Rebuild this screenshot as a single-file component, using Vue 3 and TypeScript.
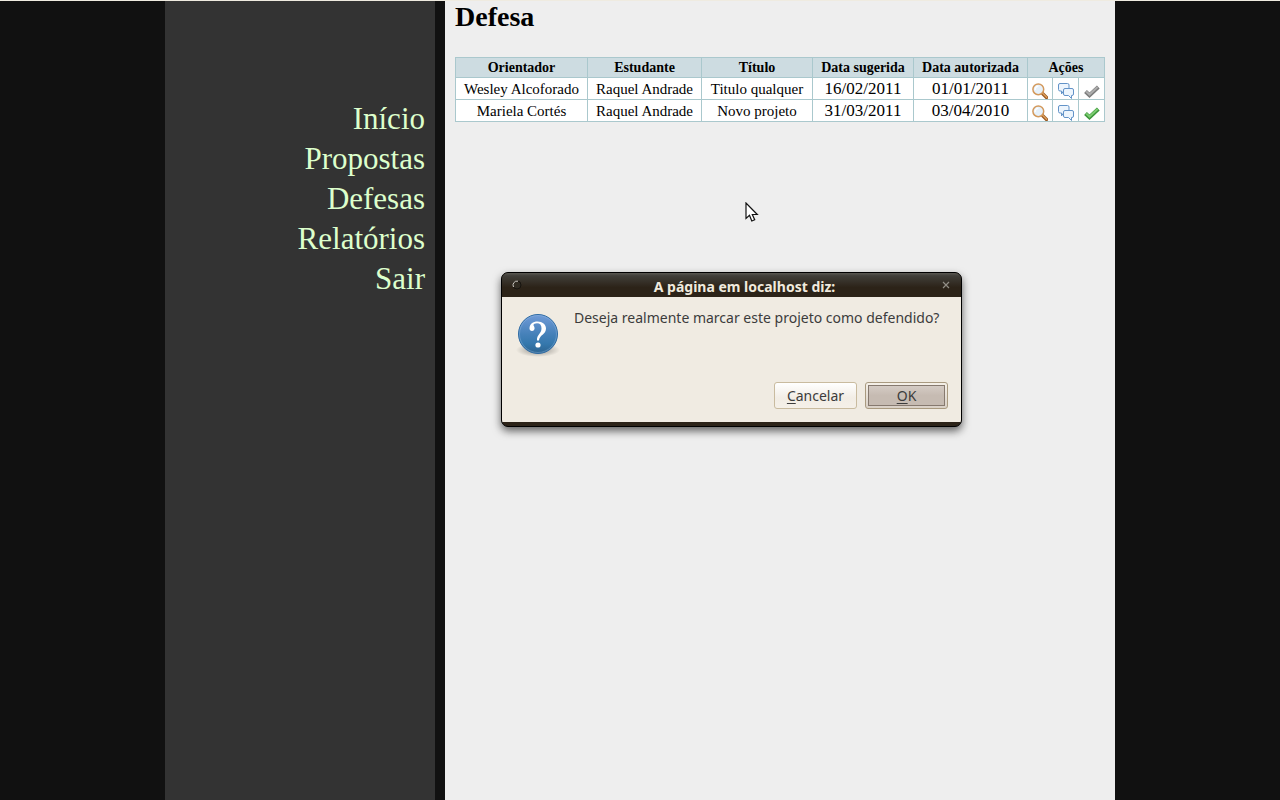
<script setup lang="ts">
import { ref } from 'vue'

interface Defense {
  advisor: string
  student: string
  title: string
  suggested: string
  authorized: string
  done: boolean
}

const links: string[] = ['Início', 'Propostas', 'Defesas', 'Relatórios', 'Sair']
const headings: string[] = ['Orientador', 'Estudante', 'Título', 'Data sugerida', 'Data autorizada']

const defenses = ref<Defense[]>([
  { advisor: 'Wesley Alcoforado', student: 'Raquel Andrade', title: 'Titulo qualquer', suggested: '16/02/2011', authorized: '01/01/2011', done: false },
  { advisor: 'Mariela Cortés', student: 'Raquel Andrade', title: 'Novo projeto', suggested: '31/03/2011', authorized: '03/04/2010', done: true },
])

const open = ref(true)
function close(): void {
  open.value = false
}
</script>

<template>
  <div class="page">
    <div class="shell">
      <nav class="sidebar">
        <a v-for="link in links" :key="link" href="#">{{ link }}</a>
      </nav>

      <main class="content">
        <h1>Defesa</h1>
        <table>
          <colgroup>
            <col class="c-advisor" />
            <col class="c-student" />
            <col class="c-title" />
            <col class="c-suggested" />
            <col class="c-authorized" />
            <col class="c-view" />
            <col class="c-action" />
            <col class="c-action" />
          </colgroup>
          <thead>
            <tr>
              <th v-for="h in headings" :key="h" scope="col">{{ h }}</th>
              <th colspan="3" scope="colgroup">Ações</th>
            </tr>
          </thead>
          <tbody>
            <tr v-for="d in defenses" :key="d.advisor">
              <td>{{ d.advisor }}</td>
              <td>{{ d.student }}</td>
              <td>{{ d.title }}</td>
              <td class="date">{{ d.suggested }}</td>
              <td class="date">{{ d.authorized }}</td>
              <td class="action">
                <a href="#" aria-label="Visualizar">
                  <svg width="16" height="16" viewBox="0 0 16 16">
                    <path d="M10.500 10.500l4 4" stroke="#97561f" stroke-width="3.200" stroke-linecap="round" />
                    <path d="M10.600 10.200l4 4" stroke="#dfa25f" stroke-width="1.400" stroke-linecap="round" />
                    <circle cx="6.300" cy="6.300" r="5.400" fill="#e6f1fb" stroke="#d3995c" stroke-width="1.500" />
                    <path d="M3.200 7a3.200 3.200 0 0 1 3.200-3.700" fill="none" stroke="#fff" stroke-width="1.400" />
                  </svg>
                </a>
              </td>
              <td class="action">
                <a href="#" aria-label="Comentários">
                  <svg width="16" height="16" viewBox="0 0 16 16" fill="#edf5fd" stroke="#6393c8" stroke-linejoin="round">
                    <path d="M2 .5h7.500q1.500 0 1.500 1.500v4.500q0 1.500-1.500 1.500H5.500L3.500 11V8H2Q.5 8 .5 6.500V2Q.5.500 2 .5z" />
                    <path d="M7 5.500h7q1.500 0 1.500 1.500v4q0 1.500-1.500 1.500h-.5v3L10.500 12.500H7Q5.500 12.500 5.500 11V7q0-1.500 1.500-1.500z" />
                  </svg>
                </a>
              </td>
              <td class="action">
                <a href="#" aria-label="Marcar como defendido">
                  <svg width="16" height="16" viewBox="0 0 16 16" fill="none">
                    <path d="M1.500 8.500L5.500 12.300 14.300 4" :stroke="d.done ? '#3c963a' : '#7c7c7c'" stroke-width="4" />
                    <path d="M2.200 8.500L5.500 11.600 13.600 4" :stroke="d.done ? '#7bcb70' : '#adadad'" stroke-width="2" />
                  </svg>
                </a>
              </td>
            </tr>
          </tbody>
        </table>
      </main>
    </div>

    <section v-if="open" class="dialog" role="alertdialog" aria-labelledby="dialog-title" aria-describedby="dialog-text">
      <header class="titlebar">
        <svg width="10" height="10" viewBox="0 0 10 10">
          <circle cx="5" cy="5" r="4" fill="#302b22" stroke="#17140f" />
          <path d="M1.500 7A4 4 0 0 1 6 1.200" fill="none" stroke="#d0cdc6" />
        </svg>
        <h2 id="dialog-title">A página em localhost diz:</h2>
        <button class="close" type="button" aria-label="Fechar" @click="close">
          <svg width="8" height="8" viewBox="0 0 8 8"><path d="M1 1l6 6M7 1L1 7" stroke="#918d85" stroke-width="1.200" /></svg>
        </button>
      </header>
      <div class="body">
        <svg class="question" width="44" height="44" viewBox="0 0 44 44" aria-hidden="true">
          <defs>
            <linearGradient id="ball" x1="0" y1="0" x2="0" y2="1">
              <stop offset="0" stop-color="#719bd8" />
              <stop offset=".5" stop-color="#4681b9" />
              <stop offset=".75" stop-color="#3578ad" />
              <stop offset="1" stop-color="#2c628f" />
            </linearGradient>
            <radialGradient id="shade">
              <stop offset="0" stop-color="#000" stop-opacity=".4" />
              <stop offset="1" stop-color="#000" stop-opacity="0" />
            </radialGradient>
          </defs>
          <ellipse cx="22" cy="37" rx="22" ry="7" fill="url(#shade)" />
          <circle cx="22" cy="21" r="19.500" fill="url(#ball)" stroke="#2f6ba3" />
          <circle cx="22" cy="21" r="18.500" fill="none" stroke="#9fc2e8" stroke-opacity=".35" />
          <path d="M13.500 15.500C13.500 11 17 8.500 21.500 8.500 26.500 8.500 30 11.500 30 15.500 30 21.500 23.300 22 23 27.500H21C20.600 21.500 25.500 20.500 25.500 15.500 25.500 12 24 10.200 21 10.200 19 10.200 17.500 11 17.500 12 17.500 13 18.600 13.500 18.600 15.300 18.600 16.800 17.500 18 16 18 14.500 18 13.500 17 13.500 15.500z" fill="#fff" />
          <circle cx="22" cy="32" r="2.600" fill="#fff" />
        </svg>
        <p id="dialog-text">Deseja realmente marcar este projeto como defendido?</p>
        <div class="buttons">
          <button type="button" class="btn" @click="close"><span><u>C</u>ancelar</span></button>
          <button type="button" class="btn ok" @click="close"><span><u>O</u>K</span></button>
        </div>
      </div>
    </section>

    <svg class="pointer" width="14" height="21" viewBox="0 0 14 21" aria-hidden="true">
      <path d="M1 1v15.500l3.500-3.200 2.300 5.700 2.900-1.200-2.400-5.300h5z" fill="#fff" stroke="#111" stroke-width="1.200" />
    </svg>
  </div>
</template>

<style>
body {
  margin: 0;
  background: #111;
}
</style>

<style scoped>
.page {
  position: relative;
  box-sizing: border-box;
  min-height: 100vh;
  display: flex;
  justify-content: center;
  border-top: 1px solid #efebe0;
  background: #111;
  font-family: "Liberation Serif", serif;
  color: #000;
}
.shell {
  display: flex;
  gap: 10px;
  width: 100%;
  max-width: 950px;
}
.sidebar {
  box-sizing: border-box;
  flex: 0 0 270px;
  display: flex;
  flex-direction: column;
  align-items: flex-end;
  padding: 98px 10px 0;
  background: #333;
}
.sidebar a {
  color: #dfc;
  font-size: 31px;
  line-height: 40px;
  text-decoration: none;
}
.content {
  flex: 1;
  min-width: 0;
  padding: 0 10px;
  background: #eee;
}
h1 {
  margin: 0 0 24px;
  font-size: 28px;
  line-height: 32px;
}
table {
  width: 100%;
  table-layout: fixed;
  border-collapse: collapse;
  background: #fff;
  font-size: 15px;
  line-height: 20px;
  text-align: center;
}
.c-advisor { width: 132px; }
.c-student { width: 114px; }
.c-title { width: 111px; }
.c-suggested { width: 101px; }
.c-authorized { width: 114px; }
.c-view { width: 25px; }
.c-action { width: 26px; }
th,
td {
  height: 21px;
  padding: 0;
  border: 1px solid #aac8cd;
  white-space: nowrap;
}
th {
  height: 19px;
  font-size: 14px;
  line-height: 19px;
  background: #cddce1;
}
.date {
  font-size: 17px;
}
.action a {
  display: flex;
  justify-content: center;
  padding-top: 4px;
}
.action svg {
  display: block;
}
.dialog {
  position: absolute;
  top: 271px;
  left: calc(50% - 139px);
  box-sizing: border-box;
  width: 461px;
  border: 1px solid #000;
  border-radius: 7px;
  overflow: hidden;
  background: #2c2318;
  box-shadow: 0 4px 8px rgba(0, 0, 0, 0.6);
  font-family: "Noto Sans", sans-serif;
  color: #3c3c3c;
}
.titlebar {
  display: flex;
  align-items: center;
  height: 24px;
  padding: 0 10px;
  background: linear-gradient(#5a5852, #403e39 12%, #2c2318 60%);
}
h2 {
  flex: 1;
  margin: 0;
  padding: 4px 0 0 26px;
  color: #f0eade;
  font-size: 14px;
  line-height: 20px;
  text-align: center;
}
.close {
  display: flex;
  padding: 1px;
  border: 0;
  background: none;
}
.body {
  display: grid;
  grid-template-columns: 44px 1fr;
  column-gap: 14px;
  padding: 10px 13px 13px 14px;
  margin-bottom: 4px;
  background: #f0ebe2;
}
.question {
  margin-top: 6px;
}
p {
  margin: 0;
  font-size: 14px;
  line-height: 22px;
  white-space: nowrap;
}
.buttons {
  grid-column: 1 / -1;
  display: flex;
  justify-content: flex-end;
  gap: 8px;
  margin-top: 25px;
}
.btn {
  box-sizing: border-box;
  width: 83px;
  height: 27px;
  padding: 2px;
  border: 1px solid #c9bb9f;
  border-radius: 3px;
  background: linear-gradient(#fff, #f2ede5 60%, #f5f0e8);
  color: #3c3c3c;
  font-family: inherit;
  font-size: 14px;
  line-height: 19px;
}
.btn span {
  display: block;
}
.btn u {
  text-underline-offset: 2px;
}
.ok {
  border-color: #a99a80;
  background: linear-gradient(#f5f0e8, #d9d0c6);
}
.ok span {
  border: 1px solid #86796f;
  background: linear-gradient(#d4cbc4, #c6bbb2 50%);
}
.pointer {
  position: absolute;
  top: 201px;
  left: calc(50% + 105px);
}
</style>
